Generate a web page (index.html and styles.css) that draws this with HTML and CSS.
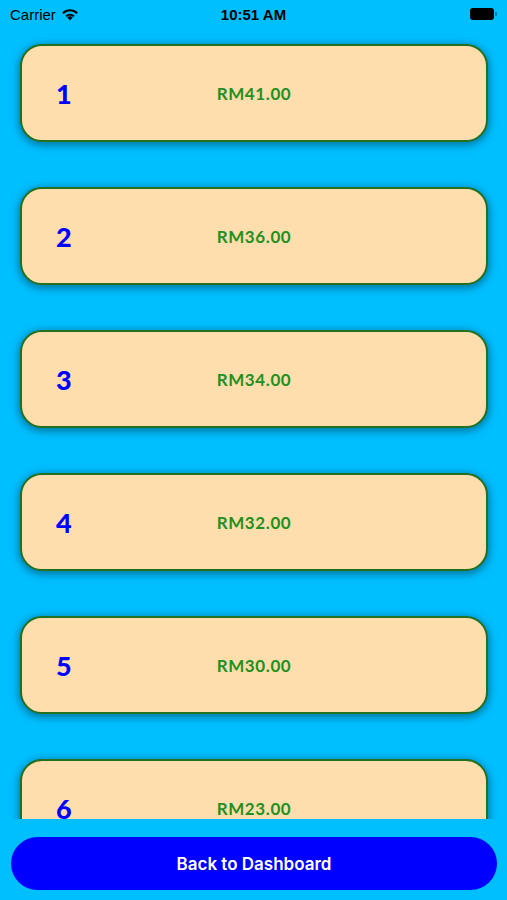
FILE: index.html
```html
<!DOCTYPE html>
<html lang="en">
<head>
    <meta charset="UTF-8">
    <meta name="viewport" content="width=device-width, initial-scale=1.0">
    <title>Prices</title>
    <link rel="stylesheet" href="styles.css">
</head>
<body>
    <div class="status">
        <div class="carrier">Carrier
            <svg class="wifi" width="18" height="13" viewBox="0 0 18 13">
                <path d="M9 12.5 L6.3 9.6 A4 4 0 0 1 11.7 9.6 Z" fill="#000"/>
                <path d="M4.4 7.6 A6.6 6.6 0 0 1 13.6 7.6 L12.3 9 A4.8 4.8 0 0 0 5.7 9 Z" fill="#000"/>
                <path d="M1.2 4.4 A11 11 0 0 1 16.8 4.4 L15.4 5.9 A9 9 0 0 0 2.6 5.9 Z" fill="#000"/>
            </svg>
        </div>
        <div class="time">10:51 AM</div>
        <div class="battery"><span class="level"></span><span class="tip"></span></div>
    </div>
    <div class="list">
        <div class="card"><span class="num">1</span><span class="price">RM41.00</span></div>
        <div class="card"><span class="num">2</span><span class="price">RM36.00</span></div>
        <div class="card"><span class="num">3</span><span class="price">RM34.00</span></div>
        <div class="card"><span class="num">4</span><span class="price">RM32.00</span></div>
        <div class="card"><span class="num">5</span><span class="price">RM30.00</span></div>
        <div class="card"><span class="num">6</span><span class="price">RM23.00</span></div>
    </div>
    <div class="footer">
        <button class="back">Back to Dashboard</button>
    </div>
</body>
</html>
```
FILE: styles.css
```css
body{
    margin: 0;
    height: 900px;
    display: flex;
    flex-direction: column;
    background-color: #00bfff;
    font-family: "Lato", "Liberation Sans", sans-serif;
    overflow: hidden;
}
.status{
    height: 28px;
    flex-shrink: 0;
    display: grid;
    grid-template-columns: 1fr auto 1fr;
    align-items: center;
    padding: 0 10px;
    font-family: "Liberation Sans", sans-serif;
    font-size: 15px;
    color: #000;
}
.carrier{
    display: flex;
    align-items: center;
    gap: 5px;
}
.time{
    font-weight: bold;
}
.battery{
    justify-self: end;
    display: flex;
    align-items: center;
    gap: 1px;
}
.level{
    width: 22px;
    height: 10px;
    background: #000;
    border-radius: 3px;
    border: 1px solid rgba(0,0,0,0.35);
}
.tip{
    width: 2px;
    height: 4px;
    background: rgba(0,0,0,0.4);
    border-radius: 0 1px 1px 0;
}
.list{
    flex: 1;
    overflow: hidden;
    padding: 16px 19px 0 20px;
    display: flex;
    flex-direction: column;
    gap: 45px;
}
.card{
    flex-shrink: 0;
    height: 94px;
    background-color: #ffdead;
    border: 2px solid #23701f;
    border-radius: 22px;
    box-shadow: 0 2px 8px 1px rgba(0,0,0,0.4);
    display: grid;
    grid-template-columns: 1fr auto 1fr;
    align-items: center;
}
.num{
    padding-left: 34px;
    color: #0000ff;
    font-size: 27px;
    font-weight: 900;
}
.price{
    color: #239023;
    font-size: 17px;
    font-weight: bold;
    letter-spacing: 0.6px;
}
.footer{
    flex-shrink: 0;
    padding: 18px 10px 10px 11px;
}
.back{
    display: block;
    width: 100%;
    height: 53px;
    border: none;
    border-radius: 27px;
    background-color: #0000ff;
    color: #fff;
    font-family: "Inter", "Liberation Sans", sans-serif;
    font-size: 17px;
    font-weight: 600;
}
```
